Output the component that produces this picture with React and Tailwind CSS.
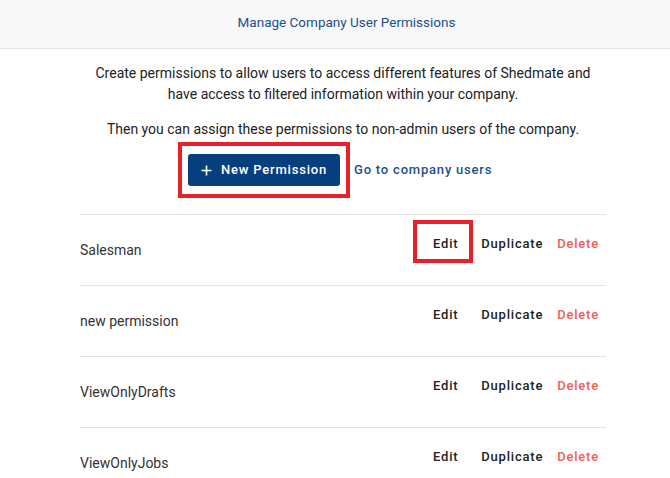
import React from "react";

const rows = ["Salesman", "new permission", "ViewOnlyDrafts", "ViewOnlyJobs"];

export default function App() {
  return (
    <div className="w-[670px] h-[478px] overflow-hidden bg-white" style={{ fontFamily: "Roboto, 'Liberation Sans', sans-serif" }}>
      <div className="h-[49px] bg-[#f8f8f8] border-b border-[#e4e4e4] flex items-center justify-center pl-[23px] pb-[4px]">
        <span className="text-[13.5px] text-[#1d4f8c]">Manage Company User Permissions</span>
      </div>
      <div className="w-[526px] ml-[80px] flex flex-col items-center">
        <p className="mt-[14px] text-[14px] leading-[21px] text-[#222] text-center w-[560px]">
          Create permissions to allow users to access different features of Shedmate and
          <br />
          have access to filtered information within your company.
        </p>
        <p className="mt-[14px] text-[14px] leading-[21px] text-[#222] text-center w-[560px]">
          Then you can assign these permissions to non-admin users of the company.
        </p>
        <div className="mt-[2px] flex items-center self-start ml-[98px]">
          <div className="border-4 border-[#e8202a] px-[6px] py-[8px]">
            <button className="w-[152px] h-[32px] bg-[#073f7e] rounded-[3px] text-white text-[13px] font-medium tracking-[0.8px] flex items-center justify-center gap-[8px]">
              <svg width="11" height="11" viewBox="0 0 11 11" className="mr-[1px]">
                <path d="M5.5 0.5v10M0.5 5.5h10" stroke="white" strokeWidth="1.6" />
              </svg>
              New Permission
            </button>
          </div>
          <span className="ml-[4px] text-[13px] font-medium tracking-[0.8px] text-[#1d4f8c]">Go to company users</span>
        </div>
        <div className="mt-[16px] w-full">
          {rows.map((name, i) => (
            <div key={name} className="h-[71px] border-t border-[#e4e4e4] flex items-start justify-between">
              <div className="pt-[25px] text-[14px] leading-5 text-[#333]">{name}</div>
              <div className="pt-[5px] flex items-start pr-[7px]">
                <div className={`w-[60px] h-[43px] border-4 ${i === 0 ? "border-[#e8202a]" : "border-transparent"} flex items-center justify-center pt-[4px] pl-[5px] text-[13px] font-medium tracking-[0.8px] text-[#222]`}>
                  Edit
                </div>
                <div className="h-[43px] flex items-center pt-[4px] ml-[8px] text-[13px] font-medium tracking-[0.8px] text-[#222]">
                  Duplicate
                </div>
                <div className="h-[43px] flex items-center pt-[4px] ml-[14px] text-[13px] font-medium tracking-[0.8px] text-[#f0605a]">
                  Delete
                </div>
              </div>
            </div>
          ))}
        </div>
      </div>
    </div>
  );
}
